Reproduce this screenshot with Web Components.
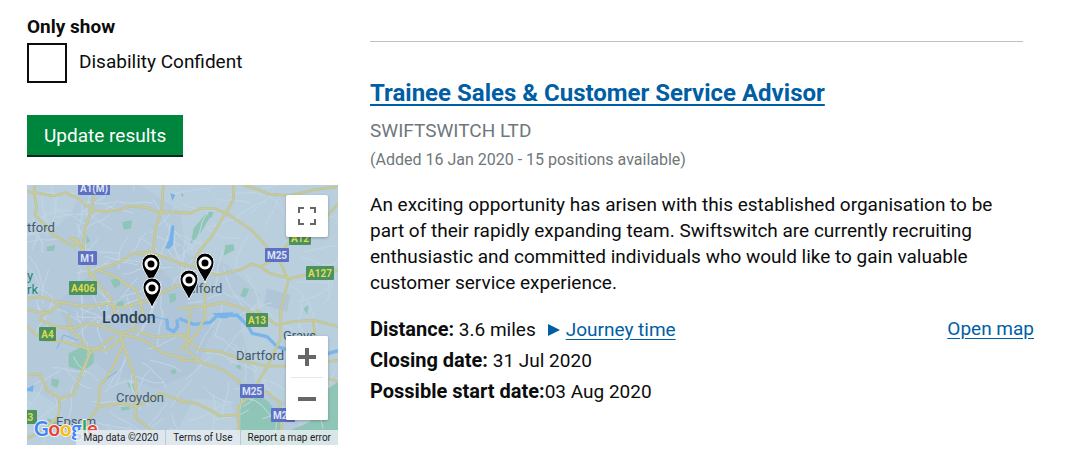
<!DOCTYPE html>
<html lang="en">
<head>
<meta charset="utf-8">
<meta name="viewport" content="width=device-width, initial-scale=1">
<title>Search results</title>
<style>
  body {
    margin: 0;
    background: #fff;
    color: #0b0c0c;
    font: 19px/26px Roboto, "Liberation Sans", sans-serif;
  }
</style>
</head>
<body>
<results-page>
  <filter-panel slot="side"></filter-panel>
  <results-map slot="side"></results-map>
  <vacancy-card>
    <a slot="title" href="#vacancy">Trainee Sales &amp; Customer Service Advisor</a>
    <span slot="employer">SWIFTSWITCH LTD</span>
    <span slot="meta">(Added 16 Jan 2020 - 15 positions available)</span>
    <span slot="summary">An exciting opportunity has arisen with this established organisation to be part of their rapidly expanding team. Swiftswitch are currently recruiting enthusiastic and committed individuals who would like to gain valuable customer service experience.</span>
    <span slot="distance">3.6 miles</span>
    <span slot="closing">31 Jul 2020</span>
    <span slot="start">03 Aug 2020</span>
  </vacancy-card>
</results-page>

<script>
class Base extends HTMLElement {
  constructor() {
    super();
    this.attachShadow({ mode: "open" }).innerHTML = this.constructor.markup;
  }
}

class ResultsPage extends Base {
  static markup = `
    <style>
      :host { display: grid; grid-template-columns: minmax(0, 311fr) minmax(0, 664fr); gap: 32px; padding: 14px 46px 16px 27px; }
      aside { display: flex; flex-direction: column; gap: 28px; }
    </style>
    <aside><slot name="side"></slot></aside>
    <main><slot></slot></main>`;
}
customElements.define("results-page", ResultsPage);

class FilterPanel extends Base {
  static markup = `
    <style>
      :host { display: block; }
      fieldset { border: 0; margin: 0; padding: 0; min-width: 0; }
      legend { padding: 0; font-size: 19px; font-weight: 700; }
      .option { display: flex; align-items: center; gap: 12px; margin: 3px 0 32px; }
      input { appearance: none; box-sizing: border-box; width: 40px; height: 40px; margin: 0; border: 2px solid #0b0c0c; background: #fff; }
      input:checked { background: #0b0c0c; box-shadow: inset 0 0 0 6px #fff; }
      button { display: block; height: 42px; padding: 0 17px; border: 0; box-shadow: inset 0 -2px 0 #002d18; background: #00853c; color: #fff; font: inherit; }
      label { padding-bottom: 2px; }
    </style>
    <form>
      <fieldset>
        <legend>Only show</legend>
        <div class="option"><input type="checkbox" id="dc"><label for="dc">Disability Confident</label></div>
      </fieldset>
      <button type="button">Update results</button>
    </form>`;
}
customElements.define("filter-panel", FilterPanel);

class VacancyCard extends Base {
  static markup = `
    <style>
      :host { display: block; }
      hr { height: 1px; margin: 27px 11px 34px 0; border: 0; background: #bfc1c3; }
      h2 { margin: 0; font-size: 24px; line-height: 34px; }
      a, ::slotted(a) { color: #005ea5; text-decoration: underline; text-underline-offset: 3px; }
      b { font-size: 20px; }
      p { margin: 0; }
      .employer { margin-top: 8px; color: #6f777b; }
      .meta { margin-top: 3px; font-size: 16px; color: #6f777b; }
      .summary { margin: 19px 11px 20px 0; }
      .row { display: flex; justify-content: space-between; }
      .facts { display: grid; gap: 4px; }
      .journey { margin-left: 12px; }
      .journey svg { margin-right: 6px; }
    </style>
    <article>
      <hr>
      <h2><slot name="title"></slot></h2>
      <p class="employer"><slot name="employer"></slot></p>
      <p class="meta"><slot name="meta"></slot></p>
      <p class="summary"><slot name="summary"></slot></p>
      <div class="facts">
        <div class="row">
          <span><b>Distance:</b> <slot name="distance"></slot><span class="journey"><svg width="12" height="12" viewBox="0 0 12 12" aria-hidden="true"><path d="M0 0 12 6 0 12Z" fill="#005ea5"/></svg><a href="#journey">Journey time</a></span></span>
          <a href="#map">Open map</a>
        </div>
        <div><b>Closing date:</b> <slot name="closing"></slot></div>
        <div><b>Possible start date:</b><slot name="start"></slot></div>
      </div>
    </article>`;
}
customElements.define("vacancy-card", VacancyCard);

/* Minor streets: short wandering lines laid out from a fixed seed. */
function streets() {
  let s = 41, d = "";
  const r = () => (s = (s * 16807) % 2147483647) / 2147483647;
  for (let i = 0; i < 190; i++) {
    let x = r() * 933, y = r() * 780, a = r() * 6.28;
    d += `M${x | 0} ${y | 0}`;
    for (let k = 0; k < 4; k++) {
      a += (r() - .5) * .7;
      x += Math.cos(a) * 26; y += Math.sin(a) * 26;
      d += `L${x | 0} ${y | 0}`;
    }
  }
  return d;
}
const nw = `M21 35 60 40 100 48 135 38 175 55 190 70 215 90 250 95 300 90 330 78 380 82 410 95 500 98M45 15 42 40 50 80 45 105 75 135 100 165 135 185 160 198 176 186 150 175 170 178 190 215M225 15 218 70 213 90 195 150 190 190 192 215 206 250 208 285 225 300M430 15 425 90 405 150 400 210 370 225M208 285 235 270 300 245 340 220 380 218 430 230 500 256M215 290 250 330 275 360 285 405M235 270 290 290 320 315 350 330 370 400M21 355 60 350 110 365 200 380 260 370 300 385 390 360 440 330 495 310M21 390 80 400 120 375`;
const ne = `M160 15 160 60 130 110 95 170 60 210 45 240 75 300 75 405M0 98 30 100 60 85 100 85 140 100 215 150 265 205 300 245 325 300 315 340 300 405M190 15 240 30 265 42 330 47 400 30 475 20M475 70 440 110 370 150 330 185 290 235 240 260 215 252 180 270 110 285 70 275M240 260 270 280 330 295 400 280 475 272M0 255 45 260 70 280M0 385 60 380 130 368 190 385 230 405`;
const sw = `M21 50 70 90 130 95 200 115 260 120 300 90M75 0 60 30 110 50 150 55 210 40 250 50 300 70M300 75 325 150 345 200 350 260 345 320 400 365M300 75 310 100 280 170 240 230 235 290 180 370M21 195 60 192 80 240 120 265 160 255 180 200 210 130 280 80M235 290 300 280 350 290 420 250 495 275M300 75 340 80 380 95 430 130 495 145M300 70 340 60 400 80 500 75M120 265 115 320 60 370M145 15 150 55 185 90 210 130M350 15 340 60M21 385 100 350 160 385`;
const se = `M303 0 300 90 275 140 265 165 235 215 225 240 265 248 300 280 306 375M225 240 195 270 175 290 175 375M0 75 60 120 120 125 200 155 260 168 330 168 475 150M0 120 50 70 75 20 75 0M0 150 60 155 130 180 170 210 200 240M0 275 50 280 90 300 120 318 175 315M230 0 290 45 340 35 400 30 475 50M400 30 405 80M30 0 20 120 60 155M440 205 475 215`;
const quads = [[-21, -15, nw], [459, -15, ne], [-21, 375, sw], [459, 375, se]];
const roads = (c, w) => quads.map(([x, y, d]) => `<path transform="translate(${x} ${y})" d="${d}" stroke="${c}" stroke-width="${w}"/>`).join("");
const shield = (x, y, w, c, t, f) => `<rect x="${x}" y="${y}" width="${w}" height="14" rx="1" fill="${c}"/><text x="${x + w / 2}" y="${y + 11}" fill="${f}" font-size="10" font-weight="700" text-anchor="middle">${t}</text>`;
const motor = (x, y, w, t) => shield(x, y, w, "#5d70c4", t, "#dce4f4");
const trunk = (x, y, w, t) => shield(x, y, w, "#4c9160", t, "#dcdc50");
const pin = (x, y) => `<g transform="translate(${x} ${y})"><path d="M0 0C-2-7-9-13-9-21a9 9 0 0 1 18 0C9-13 2-7 0 0Z" stroke="#eef3f6" stroke-width="1"/><circle cy="-20" r="5" fill="#000" stroke="#fff" stroke-width="3"/></g>`;

class ResultsMap extends Base {
  static markup = `
    <style>
      :host { display: block; position: relative; aspect-ratio: 311 / 260; overflow: hidden; background: #b4c9da; font-size: 10px; line-height: 15px; }
      .art { display: block; width: 100%; height: 100%; }
      .controls { position: absolute; inset: 10px 10px 25px auto; display: flex; flex-direction: column; justify-content: space-between; }
      button { display: grid; place-items: center; width: 42px; height: 42px; margin: 0; padding: 0; border: 0; border-radius: 2px; background: #fff; }
      .full, .zoom { box-shadow: 0 1px 3px #0004; border-radius: 2px; }
      .zoom { background: #fff; }
      .zoom::before { content: ""; position: absolute; right: 5px; left: 5px; bottom: 42px; height: 1px; background: #e6e6e6; }
      footer { position: absolute; right: 0; bottom: 0; display: flex; background: #e9eef2cc; color: #222; }
      footer > * { padding: 0 7px; color: inherit; text-decoration: none; white-space: nowrap; }
      footer a { border-left: 1px solid #b9c8d2; }
    </style>
    <svg class="art" viewBox="0 0 311 260" preserveAspectRatio="xMidYMid slice" role="img" aria-label="Map of London">
      <g transform="scale(.33333)" fill="none" stroke-linejoin="round" stroke-linecap="round">
        <path fill="#b9cfde" d="M0 0H933V780H840L790 660 690 610 640 420 700 330 590 230 480 210 460 80 340 0ZM0 0H170L130 90 60 150 0 120ZM0 600 90 660 150 780H0ZM430 780 500 640 610 650 650 780Z"/>
        <path fill="#b0c5d7" d="M190 270 300 220 400 250 500 350 560 430 500 560 390 610 240 560 130 460 90 350ZM720 310 790 330 780 380 710 360Z"/>
        <path fill="#8fc5b6" d="M125 505 160 488 200 496 200 535 170 558 125 545ZM500 130 535 88 550 95 520 145 490 180ZM545 78 560 82 552 100 540 96ZM595 180 620 178 622 195 590 212ZM650 308 667 312 655 337 640 333ZM285 112 315 105 312 130 290 134ZM250 285 278 278 280 300 262 310ZM425 328 445 325 448 345 430 355ZM265 350 290 348 290 362 270 362ZM60 185 85 180 80 198 58 198ZM180 150 190 170 178 175ZM75 580 98 585 90 610 72 600ZM430 555 448 552 446 566 434 566ZM300 590 318 598 325 620 305 605ZM62 700 90 710 88 735 60 720ZM640 640 690 628 725 650 760 700 765 780H640ZM890 620 933 590V780H790L780 740 850 710ZM625 545 640 535 642 555ZM830 370 845 360 840 390ZM280 665 300 660 310 672 285 678Z"/>
        <path stroke="#c2d6e6" stroke-width="3" d="${streets()}"/>
        <path fill="#73b2ec" d="M434 120 442 122 438 180 426 192 415 190 427 160ZM430 25 445 30 436 48ZM555 385 620 382 600 400 580 400ZM0 610 20 600 18 620 0 618ZM462 25 470 30 466 35Z"/>
        <path stroke="#79b5e9" stroke-width="10" d="M420 405 422 430 440 440 452 425 450 408M460 402 500 418 550 412 570 392 630 390 665 425 675 445 720 455 750 485 800 500 870 515 933 497"/>
        <path stroke="#79b5e9" stroke-width="3" d="M90 490 110 450 150 465M225 600 240 580 270 560M330 415 380 395 420 405"/>
        ${roads("#bac095", 8)}${roads("#c9ca9a", 5)}
      </g>
      <g font-family="Roboto, sans-serif">
        ${motor(51, -4, 32, "A1(M)")}${motor(51, 66, 19, "M1")}${motor(238, 63, 24, "M25")}${motor(213, 199, 24, "M25")}${motor(244, 223, 24, "M25")}
        ${trunk(42, 96, 28, "A406")}${trunk(12, 142, 17, "A4")}${trunk(219, 128, 22, "A13")}${trunk(262, 46, 22, "A12")}${trunk(279, 81, 28, "A127")}${trunk(-10, 225, 20, "A3")}
        <g fill="#44596c" font-size="13">
          <text x="0" y="47">tford</text><text x="165" y="108">Ilford</text><text x="89" y="217">Croydon</text>
          <text x="209" y="175">Dartford</text><text x="256" y="155">Grays</text><text x="29" y="241">Epsom</text>
          <text x="75" y="138" font-size="16" font-weight="500" fill="#2e4257">London</text>
          <g fill="#258574"><text x="0" y="95">y</text><text x="0" y="109">rk</text></g>
        </g>
        ${pin(124, 99)}${pin(125, 123)}${pin(178, 98)}${pin(162, 115)}
        <text x="7" y="251" font-family="Lato, sans-serif" font-size="20" font-weight="700" stroke="#eef4f8" stroke-width="2" paint-order="stroke"><tspan fill="#4285f4">G</tspan><tspan fill="#ea4335">o</tspan><tspan fill="#fbbc05">o</tspan><tspan fill="#4285f4">g</tspan><tspan fill="#34a853">l</tspan><tspan fill="#ea4335">e</tspan></text>
      </g>
    </svg>
    <footer><span>Map data ©2020</span><a href="#terms">Terms of Use</a><a href="#report">Report a map error</a></footer>
    <div class="controls">
      <button class="full" type="button" aria-label="Full screen"><svg width="20" height="20" viewBox="0 0 20 20" fill="none" stroke="#666" stroke-width="2"><path d="M2 7V2H7M13 2H18V7M18 13V18H13M7 18H2V13"/></svg></button>
      <div class="zoom">
        <button type="button" aria-label="Zoom in"><svg width="20" height="20" viewBox="0 0 20 20" stroke="#666" stroke-width="4"><path d="M1 10H19M10 1V19"/></svg></button>
        <button type="button" aria-label="Zoom out"><svg width="20" height="20" viewBox="0 0 20 20" stroke="#666" stroke-width="4"><path d="M1 10H19"/></svg></button>
      </div>
    </div>`;
}
customElements.define("results-map", ResultsMap);
</script>
</body>
</html>
